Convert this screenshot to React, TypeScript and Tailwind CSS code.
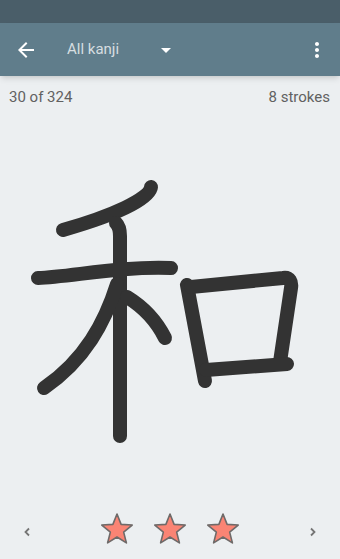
const STAR = "0,-16 4.11,-5.66 15.22,-4.94 6.66,2.16 9.4,12.94 0,7 -9.4,12.94 -6.66,2.16 -15.22,-4.94 -4.11,-5.66";

function Star() {
	return (
		<svg width="36" height="34" viewBox="-18 -18 36 34">
			<polygon points={STAR} fill="#fa8474" stroke="#6f6a69" strokeWidth="1.6" strokeLinejoin="round" />
		</svg>
	);
}

// stroke-order drawing of the character, one path per stroke
const STROKES = [
	"M151,187 C150,199 112,216 63,230",
	"M38,278 C70,277 120,266 171,268",
	"M116,223 C119,226 120,230 120,236 L120,436",
	"M117,284 C105,322 85,360 44,388",
	"M127,297 C145,308 157,322 165,338",
	"M187,285 L205,381",
	"M191,287 L283,278 C290,277 292,282 291,288 L280,362",
	"M206,370 L287,364",
];

export default function App() {
	return (
		<div className="flex flex-col h-[559px] w-[340px] bg-[#eceff1] font-['Roboto',sans-serif] overflow-hidden">
			{/* status bar */}
			<div className="h-[23px] bg-[#4a5e69]" />

			{/* toolbar */}
			<div className="relative z-10 flex items-center h-[53px] bg-[#607d8b] shadow-md">
				<div className="flex items-center justify-center w-[24px] h-[24px] ml-[14px]">
					<svg width="24" height="24" viewBox="0 0 24 24" fill="#ffffff">
						<path d="M20 11H7.83l5.59-5.59L12 4l-8 8 8 8 1.41-1.41L7.83 13H20v-2z" />
					</svg>
				</div>
				<span className="ml-[29px] text-[15px] text-white/75">All kanji</span>
				<svg className="ml-[35px]" width="24" height="24" viewBox="0 0 24 24" fill="#ffffff">
					<path d="M7 10l5 5 5-5z" />
				</svg>
				<div className="flex-1" />
				<svg className="mr-[11px]" width="24" height="24" viewBox="0 0 24 24" fill="#ffffff">
					<path d="M12 8c1.1 0 2-.9 2-2s-.9-2-2-2-2 .9-2 2 .9 2 2 2zm0 2c-1.1 0-2 .9-2 2s.9 2 2 2 2-.9 2-2-.9-2-2-2zm0 6c-1.1 0-2 .9-2 2s.9 2 2 2 2-.9 2-2-.9-2-2-2z" />
				</svg>
			</div>

			{/* info row */}
			<div className="flex items-center justify-between h-[42px] px-[9px] text-[15px] text-[#616161]">
				<span>30 of 324</span>
				<span className="mr-[1px]">8 strokes</span>
			</div>

			{/* character */}
			<svg width="340" height="380" viewBox="0 118 340 380" className="shrink-0">
				{STROKES.map((d, i) => (
					<path key={i} d={d} fill="none" stroke="#333333" strokeWidth="14" strokeLinecap="round" strokeLinejoin="round" />
				))}
			</svg>

			{/* rating + nav */}
			<div className="flex items-center justify-between flex-1 px-[24px]">
				<svg width="6" height="10" viewBox="0 0 6 10" className="mt-[6px]">
					<path d="M5 1.5 L1.5 5 L5 8.5" fill="none" stroke="#757575" strokeWidth="1.8" />
				</svg>
				<div className="flex items-center gap-[17px]">
					<Star />
					<Star />
					<Star />
				</div>
				<svg width="6" height="10" viewBox="0 0 6 10" className="mt-[6px]">
					<path d="M1 1.5 L4.5 5 L1 8.5" fill="none" stroke="#757575" strokeWidth="1.8" />
				</svg>
			</div>
		</div>
	);
}
